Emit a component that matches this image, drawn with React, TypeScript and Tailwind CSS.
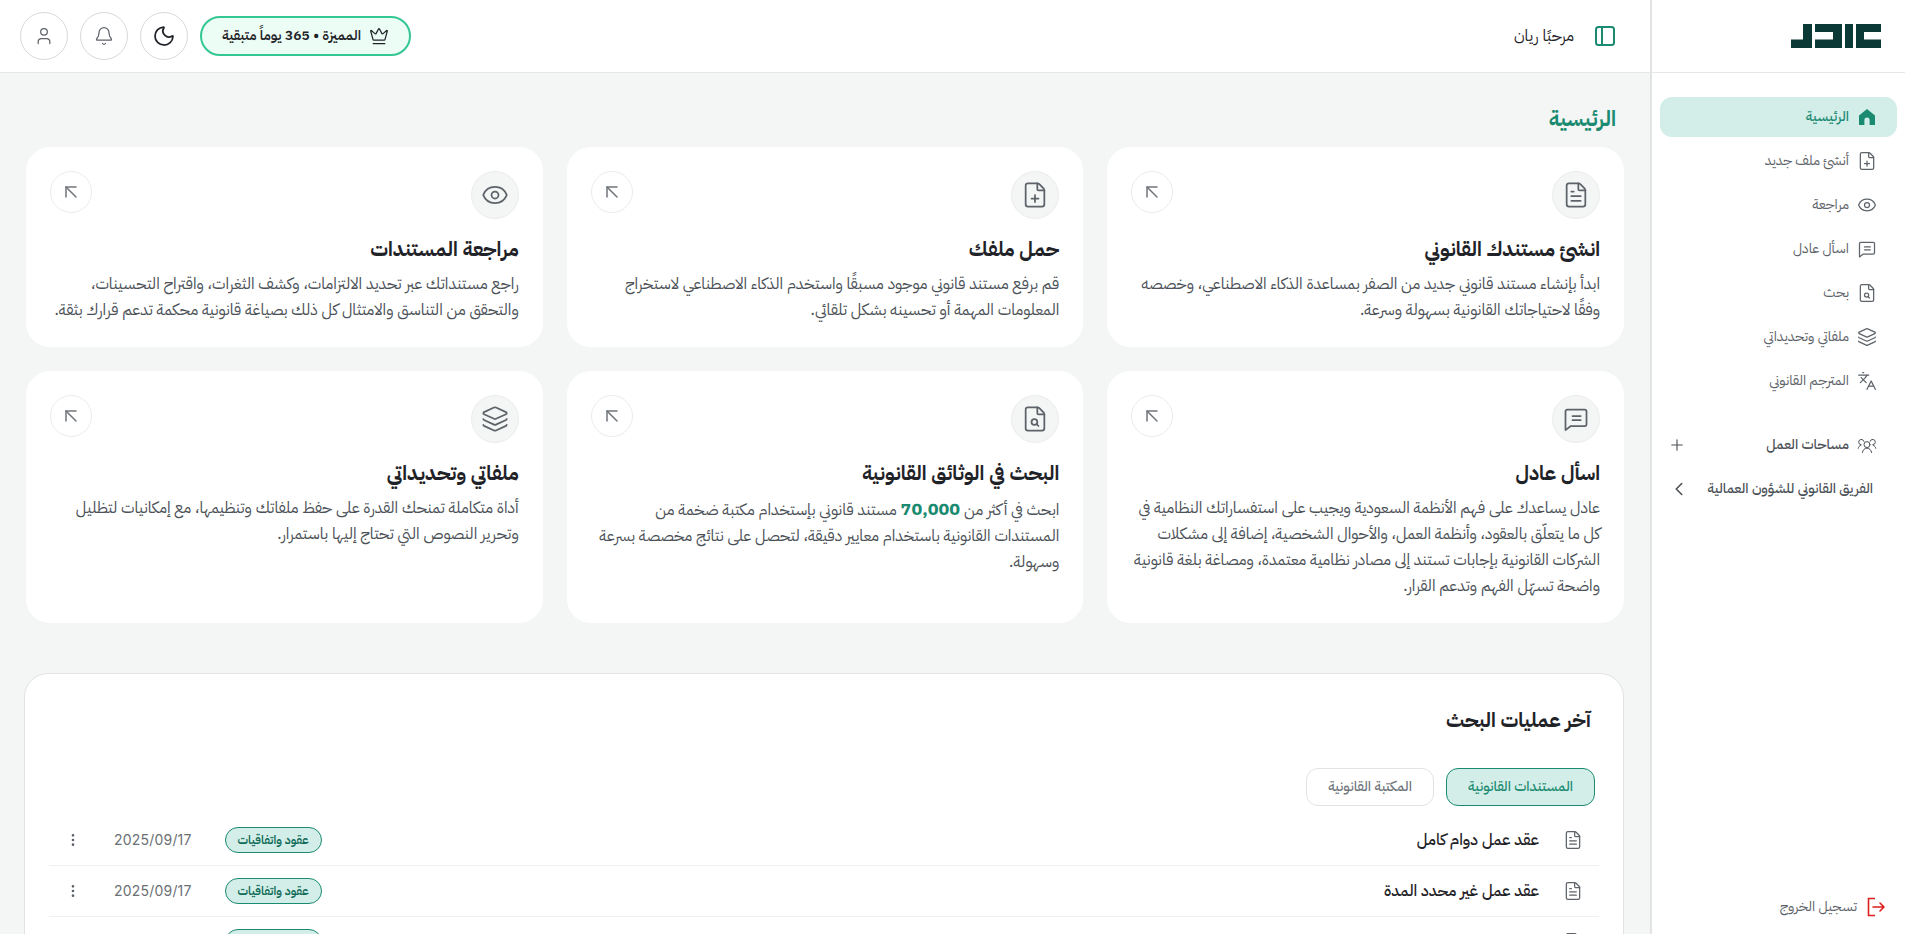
import {
  ArrowUpLeft,
  Bell,
  ChevronLeft,
  Crown,
  Eye,
  FileSearch,
  FileText,
  FilePlus,
  Languages,
  Layers,
  Moon,
  MoreVertical,
  Plus,
  User,
} from "lucide-react";

const font = "font-['IBM_Plex_Sans_Arabic','Noto_Sans','Noto_Sans_Arabic','DejaVu_Sans',sans-serif]";

function HomeIcon({ size = 20 }: { size?: number; strokeWidth?: number; fill?: string }) {
  return (
    <svg width={size} height={size} viewBox="0 0 20 20" fill="currentColor">
      <path d="M10 2 18 8.6V18H12.6V13.2A2.6 2.6 0 0 0 7.4 13.2V18H2V8.6Z" />
    </svg>
  );
}

// speech bubble with its tail at the bottom left, two lines inside
function ChatIcon({ size = 20, strokeWidth = 1.5 }: { size?: number; strokeWidth?: number; fill?: string }) {
  return (
    <svg width={size} height={size} viewBox="0 0 24 24" fill="none" stroke="currentColor" strokeWidth={strokeWidth} strokeLinecap="round" strokeLinejoin="round">
      <path d="M3 5.5A1.5 1.5 0 0 1 4.5 4h15A1.5 1.5 0 0 1 21 5.5v11a1.5 1.5 0 0 1-1.5 1.5H7.5L3 21.5Z" />
      <path d="M9 9.5h7M9 13h7" />
    </svg>
  );
}

function TeamIcon() {
  return (
    <svg width="20" height="20" viewBox="0 0 24 24" fill="none" stroke="currentColor" strokeWidth="1.2" strokeLinecap="round">
      <circle cx="12" cy="11.5" r="3.6" />
      <path d="M6.5 21c.4-3 2.6-5.2 5.5-5.2s5.100 2.200 5.500 5.200" />
      <path d="M8.300 7.600A3.200 3.200 0 1 0 5 11.700M1.500 16c.3-1.800 1.400-3.200 3-3.800" />
      <path d="M15.700 7.600A3.200 3.200 0 1 1 19 11.700M22.500 16c-.3-1.800-1.400-3.200-3-3.800" />
    </svg>
  );
}

function ExitIcon() {
  return (
    <svg width="20" height="20" viewBox="0 0 20 20" fill="none" stroke="#e01e1e" strokeWidth="1.6">
      <path d="M8 1.500H1.500v17H8" />
      <path d="M6 10h11M13 6l4 4-4 4" strokeLinecap="round" strokeLinejoin="round" />
    </svg>
  );
}

function PanelIcon() {
  return (
    <svg width="24" height="24" viewBox="0 0 24 24" fill="none" stroke="#1a8a70" strokeWidth="2">
      <rect x="3" y="3" width="18" height="18" rx="2.500" />
      <path d="M9 3v18" />
    </svg>
  );
}

const navItems = [
  { label: "الرئيسية", icon: HomeIcon, active: true },
  { label: "أنشئ ملف جديد", icon: FilePlus },
  { label: "مراجعة", icon: Eye },
  { label: "اسأل عادل", icon: ChatIcon },
  { label: "بحث", icon: FileSearch },
  { label: "ملفاتي وتحديداتي", icon: Layers },
  { label: "المترجم القانوني", icon: Languages },
];

const cards = [
  {
    title: "انشئ مستندك القانوني",
    text: "ابدأ بإنشاء مستند قانوني جديد من الصفر بمساعدة الذكاء الاصطناعي، وخصصه وفقًا لاحتياجاتك القانونية بسهولة وسرعة.",
    icon: FileText,
  },
  {
    title: "حمل ملفك",
    text: "قم برفع مستند قانوني موجود مسبقًا واستخدم الذكاء الاصطناعي لاستخراج المعلومات المهمة أو تحسينه بشكل تلقائي.",
    icon: FilePlus,
  },
  {
    title: "مراجعة المستندات",
    text: "راجع مستنداتك عبر تحديد الالتزامات، وكشف الثغرات، واقتراح التحسينات، والتحقق من التناسق والامتثال كل ذلك بصياغة قانونية محكمة تدعم قرارك بثقة.",
    icon: Eye,
  },
  {
    title: "اسأل عادل",
    text: "عادل يساعدك على فهم الأنظمة السعودية ويجيب على استفساراتك النظامية في كل ما يتعلّق بالعقود، وأنظمة العمل، والأحوال الشخصية، إضافة إلى مشكلات الشركات القانونية بإجابات تستند إلى مصادر نظامية معتمدة، ومصاغة بلغة قانونية واضحة تسهّل الفهم وتدعم القرار.",
    icon: ChatIcon,
  },
  {
    title: "البحث في الوثائق القانونية",
    text: (
      <>
        ابحث في أكثر من <span className="text-lg font-bold text-[#1a8a70]">70,000</span> مستند قانوني بإستخدام مكتبة ضخمة من المستندات القانونية باستخدام معايير دقيقة، لتحصل على نتائج مخصصة بسرعة وسهولة.
      </>
    ),
    icon: FileSearch,
  },
  {
    title: "ملفاتي وتحديداتي",
    text: "أداة متكاملة تمنحك القدرة على حفظ ملفاتك وتنظيمها، مع إمكانيات لتظليل وتحرير النصوص التي تحتاج إليها باستمرار.",
    icon: Layers,
  },
];

const rows = ["عقد عمل دوام كامل", "عقد عمل غير محدد المدة", "عقد عمل محدد المدة"];

function Logo() {
  return (
    <svg width="90" height="24" viewBox="0 0 90 24" fill="#0b3a36">
      <path d="M0 24V15.500H12V0H21V24Z" />
      <path d="M24 0H51V24H24V15.500H42V8H24Z" />
      <path d="M54 0H62V24H54Z" />
      <path d="M65 0H90V8H73V15.500H90V24H65Z" />
    </svg>
  );
}

export default function App() {
  return (
    <div dir="rtl" className={`${font} flex h-screen overflow-hidden bg-white text-[#1f2328]`}>
      <aside className="flex w-[255px] shrink-0 flex-col border-l-2 border-[#e2e4e4] bg-white">
        <div className="flex h-[73px] shrink-0 items-center border-b border-[#e5e7eb] pr-6">
          <div dir="ltr">
            <Logo />
          </div>
        </div>
        <nav className="flex flex-col gap-1 px-2 pt-6">
          {navItems.map(({ label, icon: Icon, active }) => (
            <div
              key={label}
              className={`flex h-10 items-center gap-2 rounded-xl pr-5 text-sm ${
                active ? "bg-[#d3eee8] font-medium text-[#1a8a70]" : "text-[#5d6369]"
              }`}
            >
              <Icon size={20} strokeWidth={1.5} />
              <span>{label}</span>
            </div>
          ))}
        </nav>
        <div className="mt-6 flex flex-col gap-1 px-2">
          <div className="flex h-10 items-center justify-between pr-5 pl-2 text-sm font-medium text-[#4b5157]">
            <div className="flex items-center gap-2">
              <TeamIcon />
              <span>مساحات العمل</span>
            </div>
            <Plus size={18} strokeWidth={1.5} />
          </div>
          <div className="flex h-10 items-center justify-between pr-6 pl-2 text-sm font-medium text-[#4b5157]">
            <span>الفريق القانوني للشؤون العمالية</span>
            <ChevronLeft size={22} strokeWidth={1.75} />
          </div>
        </div>
        <div className="mt-auto flex items-center gap-[10px] pr-[18px] pb-[17px] text-sm text-[#5d6369]">
          <ExitIcon />
          <span>تسجيل الخروج</span>
        </div>
      </aside>

      <div className="flex min-w-0 flex-1 flex-col bg-[#f4f6f5]">
        <header className="flex h-[73px] shrink-0 items-center justify-between border-b border-[#e5e7eb] bg-white pr-[33px] pl-5">
          <div className="flex items-center gap-[19px]">
            <PanelIcon />
            <span className="text-base">مرحبًا ريان</span>
          </div>
          <div className="flex items-center gap-3">
            <div className="flex h-10 w-[211px] items-center justify-center gap-2 rounded-full border-2 border-[#34c795] bg-[#ecfdf5] text-sm font-semibold">
              <Crown size={20} strokeWidth={1.5} />
              <span>المميزة • 365 يوماً متبقية</span>
            </div>
            <div className="flex h-12 w-12 items-center justify-center rounded-full border border-[#d9d9d9]">
              <Moon size={24} strokeWidth={1.75} className="text-[#1f2328]" />
            </div>
            <div className="flex h-12 w-12 items-center justify-center rounded-full border border-[#d9d9d9] text-[#5d6369]">
              <Bell size={20} strokeWidth={1.5} />
            </div>
            <div className="flex h-12 w-12 items-center justify-center rounded-full border border-[#d9d9d9] text-[#5d6369]">
              <User size={20} strokeWidth={1.5} />
            </div>
          </div>
        </header>

        <main className="min-h-0 flex-1 overflow-hidden px-[26px] pt-8">
          <h1 className="mb-[14px] pr-2 text-[21px] leading-7 font-bold text-[#1a8a70]">الرئيسية</h1>
          <div className="grid grid-cols-3 gap-6">
            {cards.map(({ title, text, icon: Icon }) => (
              <div key={title} className="rounded-3xl bg-white p-6">
                <div className="mb-4 flex items-start justify-between">
                  <div className="flex h-12 w-12 items-center justify-center rounded-full border border-[#ececec] bg-[#f4f5f5] text-[#5d6369]">
                    <Icon size={28} strokeWidth={1.5} />
                  </div>
                  <div className="flex h-[42px] w-[42px] items-center justify-center rounded-full border border-[#ececec] text-[#70767c]">
                    <ArrowUpLeft size={24} strokeWidth={1.5} />
                  </div>
                </div>
                <h2 className="mb-2 text-xl font-bold">{title}</h2>
                <p className="text-base leading-[26px] text-[#4b5157]">{text}</p>
              </div>
            ))}
          </div>

          <section className="mt-[50px] -ml-0.5 rounded-3xl border border-[#e2e4e4] bg-white px-6 pt-8">
            <h2 className="mb-[34px] pr-2 text-xl leading-7 font-bold">آخر عمليات البحث</h2>
            <div className="mb-[9px] flex gap-3 pr-[4px]">
              <div className="flex h-[38px] w-[149px] items-center justify-center rounded-xl border border-[#1a8a70] bg-[#d3eee8] text-sm font-medium text-[#1a8a70]">
                المستندات القانونية
              </div>
              <div className="flex h-[38px] w-[128px] items-center justify-center rounded-xl border border-[#e2e4e4] text-sm font-medium text-[#70767c]">
                المكتبة القانونية
              </div>
            </div>
            {rows.map((name) => (
              <div key={name} className="flex h-[51px] items-center border-b border-[#f0f1f1]">
                <FileText size={20} strokeWidth={1.5} className="mr-4 text-[#5d6369]" />
                <span className="mr-6 text-base font-medium">{name}</span>
                <div className="mr-auto flex h-[26px] w-[97px] items-center justify-center rounded-full border border-[#1a8a70] bg-[#d3eee8] text-xs font-semibold text-[#0f6b57]">
                  عقود واتفاقيات
                </div>
                <span className="mr-[33px] font-['Inter',sans-serif] text-sm tracking-[0.2px] text-[#6b7075]">2025/09/17</span>
                <MoreVertical size={16} className="mr-[33px] ml-4 text-[#5d6369]" />
              </div>
            ))}
          </section>
        </main>
      </div>
    </div>
  );
}
